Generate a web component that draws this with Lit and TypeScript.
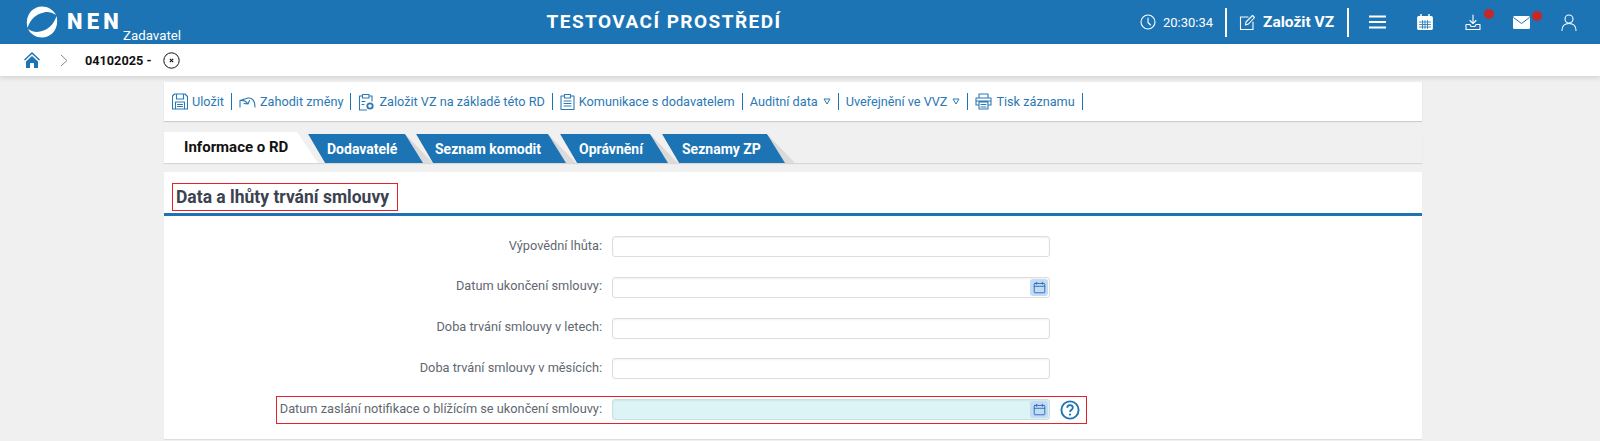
import { LitElement, html, css, svg } from "lit";
import { customElement } from "lit/decorators.js";

const I = (w: number, h: number, vb: string, body: unknown) =>
  html`<svg width=${w} height=${h} viewBox=${vb} fill="none" stroke="currentColor" stroke-width="1.1" stroke-linecap="round" stroke-linejoin="round">${body}</svg>`;

const cal = (w: number) => I(w, w, "0 0 16 16", svg`<rect x="1.5" y="3" width="13" height="11.5" rx=".8"/><path d="M1.5 6.5h13M4.5 1.5V4M11.5 1.5V4"/>`);

@customElement("app-root")
export class AppRoot extends LitElement {
  static styles = css`
    :host { display: block; width: 1600px; height: 441px; overflow: hidden; background: #f0f0f0; font-family: Roboto, "Liberation Sans", sans-serif; color: #222; }
    .top { height: 44px; background: #1c74b4; color: #fff; display: flex; align-items: center; position: relative; }
    .logo { margin-left: 26px; display: flex; align-items: center; width: 156px; position: relative; height: 44px; }
    .nen { font-weight: 900; font-size: 22px; letter-spacing: 4.2px; margin-left: 9px; margin-top: -1px; line-height: 22px; }
    .role { position: absolute; left: 97px; top: 28px; font-size: 13.3px; line-height: 15px; }
    .title { position: absolute; left: 0; width: 1328px; top: 0; line-height: 44px; text-align: center; font-size: 19px; font-weight: 700; letter-spacing: 1.45px; }
    .right { margin-left: auto; display: flex; align-items: center; height: 44px; position: relative; }
    .clock { display: flex; align-items: center; gap: 7px; font-size: 13px; width: 94px; padding-left: 9px; box-sizing: border-box; }
    .vsep { width: 2px; height: 29px; background: #fff; }
    .new { display: flex; align-items: center; gap: 7px; font-size: 15.5px; font-weight: 700; width: 120px; padding-left: 12px; box-sizing: border-box; }
    .ico { width: 48px; display: flex; justify-content: center; position: relative; }
    .ham { width: 48px; margin-left: 4px; }
    .usr { width: 47px; margin-right: 8px; }
    .dot { position: absolute; width: 10px; height: 10px; border-radius: 50%; background: #c62828; top: -5px; left: 35px; }
    .crumb { height: 32px; background: #fff; display: flex; align-items: center; box-shadow: 0 2px 5px rgba(0,0,0,.12); position: relative; }
    .home { margin-left: 24px; color: #1c74b4; display: flex; }
    .chev { margin-left: 20px; display: flex; color: #888; }
    .code { margin-left: 17px; font-size: 12.7px; font-weight: 700; color: #111; }
    .x { margin-left: 12px; display: flex; color: #111; }
    .wrap { width: 1258px; margin: 6px 0 0 164px; }
    .bar { height: 39px; background: #fff; box-shadow: 0 1px 1px rgba(0,0,0,.15); display: flex; align-items: center; padding-left: 8px; font-size: 12.7px; color: #2a78b4; }
    .bi { display: inline-flex; align-items: center; gap: 4px; height: 17px; border-right: 1px solid #1c74b4; padding-right: 7px; margin-right: 7px; white-space: nowrap; }
    .tri { margin-left: 1px; }
    .tabs { display: flex; margin-top: 11px; height: 31px; box-shadow: 0 1px 1px rgba(0,0,0,.1); position: relative; }
    .tab { height: 29px; margin-top: 2px; position: relative; background: linear-gradient(to right, #bbb, #ddd); clip-path: polygon(0 0, calc(100% - 28px) 0, 100% 100%, 17px 100%); box-sizing: border-box; flex: none; }
    .tab span { display: block; height: 100%; background: #1c74b4; color: #fff; font-size: 14px; font-weight: 700; line-height: 30px; clip-path: polygon(0 0, calc(100% - 28px) 0, calc(100% - 10px) 100%, 17px 100%); box-sizing: border-box; white-space: nowrap; }
    .tab.on { margin-top: 0; height: 31px; background: #fff; clip-path: none; width: 133px; font-size: 15px; font-weight: 700; color: #111; line-height: 30px; padding-left: 20px; margin-right: 11px; white-space: nowrap; }
    .tab.on::after { content: ""; position: absolute; left: 133px; top: 0; width: 21px; height: 31px; background: #fff; clip-path: polygon(0 0, 100% 100%, 0 100%); }
    .panel { margin-top: 9px; background: #fff; height: 268px; box-sizing: border-box; border-bottom: 1px solid #ddd; }
    .ph { border-bottom: 3px solid #1c74b4; position: relative; height: 41px; }
    .ph h2 { position: absolute; left: 8px; top: 11px; margin: 0; width: 226px; height: 28px; box-sizing: border-box; border: 1px solid #e8202a; padding-left: 3px; font-size: 17.5px; font-weight: 700; color: #3c4250; line-height: 26px; white-space: nowrap; }
    .rows { display: flex; flex-direction: column; gap: 19.75px; padding-top: 20px; position: relative; }
    .row { display: flex; height: 21px; align-items: center; }
    .lab { width: 448px; text-align: right; font-size: 12.78px; color: #626872; padding: 0 10px 3px 0; box-sizing: border-box; }
    .inp { width: 438px; height: 21px; box-sizing: border-box; border: 1px solid #ddd; border-radius: 3px; box-shadow: inset 0 1px 2px rgba(0,0,0,.06); background: #fff; position: relative; }
    .inp.blue { background: #dcf4f6; border-color: #c6dfe0; }
    .cb { position: absolute; right: 1px; top: 1px; width: 18px; height: 17px; background: #c3dcf4; border-radius: 3px; color: #2368b4; display: flex; align-items: center; justify-content: center; }
    .help { margin-left: 10px; display: flex; color: #1c74b4; }
    .mark { position: absolute; left: 112px; top: 180px; width: 811px; height: 28px; border: 1px solid #e8202a; box-sizing: border-box; pointer-events: none; }
  `;

  render() {
    const bi = (ic: unknown, t: string, tri = false) => html`<span class="bi">${ic}${t}${tri ? html`<svg class="tri" width="8" height="7" viewBox="0 0 8 7" fill="none" stroke="currentColor"><path d="M1 1h6L4 6z"/></svg>` : ""}</span>`;
    const tab = (w: number, m: number, pad: number, t: string) => html`<div class="tab" style="width:${w}px;margin-right:${m}px"><span style="padding-left:${pad}px">${t}</span></div>`;
    const row = (l: string, blue = false, c = false, help = false) => html`<div class="row"><div class="lab">${l}</div><div class="inp ${blue ? "blue" : ""}">${c ? html`<span class="cb">${cal(13)}</span>` : ""}</div>${help ? html`<span class="help"><svg width="20" height="20" viewBox="0 0 20 20" fill="none" stroke="currentColor"><circle cx="10" cy="10" r="8.6" stroke-width="1.9"/><path d="M7.2 7.8C7.2 6 8.5 5.2 10 5.2s2.8 1 2.8 2.5c0 2-2.8 2.2-2.8 4.3" stroke-width="1.8"/><circle cx="10" cy="14.6" r="1.1" fill="currentColor" stroke="none"/></svg></span>` : ""}</div>`;
    return html`
      <div class="top">
        <div class="logo">
          <svg width="32" height="32" viewBox="0 0 32 32" fill="#fff"><path d="M1.500 22C-1.500 10 6 .5 16 .5c6 0 11 3 14 8.500-4-2.500-8-3.500-12-2.500C10 8 4.500 13 1.500 22z"/><path d="M30.500 10C33.500 22 26 31.500 16 31.500c-6 0-11-3-14-8.500 4 2.500 8 3.500 12 2.500C22 24 27.500 19 30.500 10z"/></svg>
          <span class="nen">NEN</span><span class="role">Zadavatel</span>
        </div>
        <div class="title">TESTOVACÍ PROSTŘEDÍ</div>
        <div class="right">
          <div class="clock">${I(16, 16, "0 0 16 16", svg`<circle cx="8" cy="8" r="7"/><path d="M8 4v4.500l2.500 2.500"/>`)}20:30:34</div>
          <div class="vsep"></div>
          <div class="new">${I(17, 17, "0 0 17 17", svg`<path d="M9 3H1.500v12.500H14V8"/><path d="M6.500 11l.5-3L13.500 1.500l2 2L9.500 10z"/>`)}Založit VZ</div>
          <div class="vsep"></div>
          <div class="ico ham">${I(17, 14, "0 0 17 14", svg`<path d="M.5 1.500h16M.5 7h16M.5 12.500h16" stroke-width="2"/>`)}</div>
          <div class="ico">${I(16, 16, "0 0 16 16", svg`<rect x=".7" y="2.500" width="14.600" height="13" rx="1" fill="#fff" stroke="#fff"/><path d="M4 .5v3M12 .5v3" stroke="#fff" stroke-width="1.500"/><path d="M2.500 8h11M2.500 10.500h11M2.500 13h11M5.500 6.500V14.500M8 6.500V14.500M10.500 6.500V14.500" stroke="#1c74b4" stroke-width=".8"/>`)}</div>
          <div class="ico">${I(16, 17, "0 0 16 17", svg`<path d="M8 1v8M5 6.500L8 9.500 11 6.500M1 10.500h4l1 2h4l1-2h4v5H1z"/>`)}<i class="dot"></i></div>
          <div class="ico"><svg width="17" height="13" viewBox="0 0 17 13"><rect width="17" height="13" rx="1.500" fill="#fff"/><path d="M.5 1.500L8.500 7.500 16.500 1.500" fill="none" stroke="#1c74b4"/></svg><i class="dot"></i></div>
          <div class="ico usr">${I(16, 17, "0 0 16 17", svg`<circle cx="8" cy="5" r="4"/><path d="M1 16.500c0-5 3-7 7-7s7 2 7 7"/>`)}</div>
        </div>
      </div>
      <div class="crumb">
        <span class="home"><svg width="16" height="16" viewBox="0 0 16 16" fill="currentColor"><path d="M8 0L0 7.500l1 1L8 2l7 6.500 1-1z"/><path d="M2 9.500L8 4l6 5.500V16H10v-5H6v5H2z"/></svg></span>
        <span class="chev"><svg width="8" height="13" viewBox="0 0 8 13" fill="none" stroke="currentColor"><path d="M1 1l6 5.500L1 12"/></svg></span>
        <span class="code">04102025 -</span>
        <span class="x"><svg width="17" height="17" viewBox="0 0 17 17" fill="none" stroke="currentColor"><circle cx="8.500" cy="8.500" r="7.700"/><path d="M6.800 6.800l3.400 3.400M10.200 6.800l-3.400 3.400" stroke-width="1.100"/></svg></span>
      </div>
      <div class="wrap">
        <div class="bar">
          ${bi(I(16, 17, "0 0 16 17", svg`<path d="M2.500 1h10.500l2.500 2.500V16H.5V3zM4.500 1v5h7V1M3.500 16V9h9v7M5.500 11.500h5M5.500 13.500h5"/>`), "Uložit")}
          ${bi(I(17, 13, "0 0 17 13", svg`<path d="M1 12V5.500L9 3c3.500-.5 7 2 7 9M1 5.500c3-.5 6 .5 8 3.500M9 9l1.500-3.500M9 9L5 8.500"/>`), "Zahodit změny")}
          ${bi(I(17, 18, "0 0 17 18", svg`<path d="M4.500 3H1.500v14h7M11 3h3v5M4.500 1.500H11V5H4.500zM4 8.500h3M4 11.500h2"/><circle cx="12" cy="13" r="2.700" stroke-width="1.800"/>`), "Založit VZ na základě této RD")}
          ${bi(I(15, 17, "0 0 15 17", svg`<path d="M4 3H1v13.500h13V3h-3M4.500 1.500h6V5h-6zM4 8h7M4 10.500h7M4 13h7"/>`), "Komunikace s dodavatelem")}
          ${bi("", "Auditní data", true)}
          ${bi("", "Uveřejnění ve VVZ", true)}
          ${bi(I(17, 17, "0 0 17 17", svg`<path d="M4 5V1h9v4M4 12H1V5h15v7h-3M4 9h9v7H4zM6 11.500h5M6 14h5M1 8h15"/>`), "Tisk záznamu")}
        </div>
        <div class="tabs">
          <div class="tab on">Informace o RD</div>
          ${tab(125, -17, 19, "Dodavatelé")}${tab(160, -16, 19, "Seznam komodit")}${tab(118, -16, 19, "Oprávnění")}${tab(133, 0, 20, "Seznamy ZP")}
        </div>
        <div class="panel">
          <div class="ph"><h2>Data a lhůty trvání smlouvy</h2></div>
          <div class="rows">
            ${row("Výpovědní lhůta:")}
            ${row("Datum ukončení smlouvy:", false, true)}
            ${row("Doba trvání smlouvy v letech:")}
            ${row("Doba trvání smlouvy v měsících:")}
            ${row("Datum zaslání notifikace o blížícím se ukončení smlouvy:", true, true, true)}
            <div class="mark"></div>
          </div>
        </div>
      </div>
    `;
  }
}
